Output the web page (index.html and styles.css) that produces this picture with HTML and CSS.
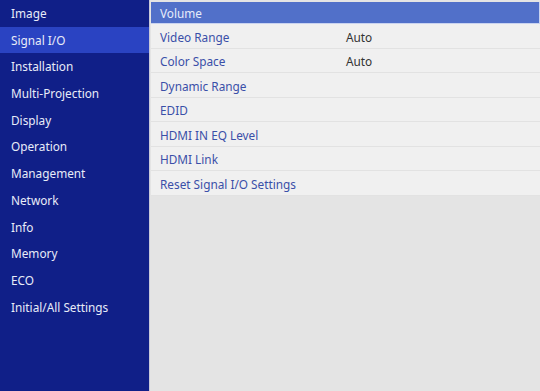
FILE: index.html
```html
<!DOCTYPE html>
<html lang="en">
<head>
<meta charset="UTF-8">
<title>Signal I/O</title>
<link rel="stylesheet" href="styles.css">
</head>
<body>
<div class="screen">
  <ul class="menu">
    <li>Image</li>
    <li class="active">Signal I/O</li>
    <li>Installation</li>
    <li>Multi-Projection</li>
    <li>Display</li>
    <li>Operation</li>
    <li>Management</li>
    <li>Network</li>
    <li>Info</li>
    <li>Memory</li>
    <li>ECO</li>
    <li>Initial/All Settings</li>
  </ul>
  <div class="panel">
    <div class="list">
      <div class="row head">Volume</div>
      <div class="row"><span class="name">Video Range</span><span class="value">Auto</span></div>
      <div class="row"><span class="name">Color Space</span><span class="value">Auto</span></div>
      <div class="row"><span class="name">Dynamic Range</span></div>
      <div class="row"><span class="name">EDID</span></div>
      <div class="row"><span class="name">HDMI IN EQ Level</span></div>
      <div class="row"><span class="name">HDMI Link</span></div>
      <div class="row"><span class="name">Reset Signal I/O Settings</span></div>
    </div>
  </div>
</div>
</body>
</html>
```

FILE: styles.css
```css
body {
  margin: 0;
  padding: 0;
  font-family: "Noto Sans", "Open Sans", sans-serif;
  font-size: 11.8px;
}

.screen {
  display: flex;
  width: 540px;
  height: 391px;
  overflow: hidden;
}

.menu {
  list-style: none;
  margin: 0;
  padding: 0;
  width: 149px;
  background-color: #101f88;
  border-right: 1px solid #c8c8d8;
  color: #e8ecf8;
}

.menu li {
  box-sizing: border-box;
  height: 26.7px;
  line-height: 25.7px;
  padding-top: 1px;
  padding-left: 11px;
}

.menu li.active {
  background-color: #2a43c2;
}

.panel {
  flex: 1;
  background-color: #e4e4e4;
  padding-top: 2px;
}

.list {
  background-color: #f0f0f0;
  margin-left: 1px;
}

.row {
  box-sizing: border-box;
  display: flex;
  height: 24.5px;
  align-items: center;
  padding-top: 2px;
  padding-left: 9px;
  border-bottom: 1px solid #e2e2e2;
  color: #3a4fa8;
}

.row.head {
  height: 22px;
  padding-top: 0;
  background-color: #5170c9;
  color: #e6ecfa;
  border-bottom: 1px solid #c9d3f0;
  border-right: 1px solid #c9d3f0;
}

.name {
  width: 186px;
}

.value {
  color: #333333;
}
```
